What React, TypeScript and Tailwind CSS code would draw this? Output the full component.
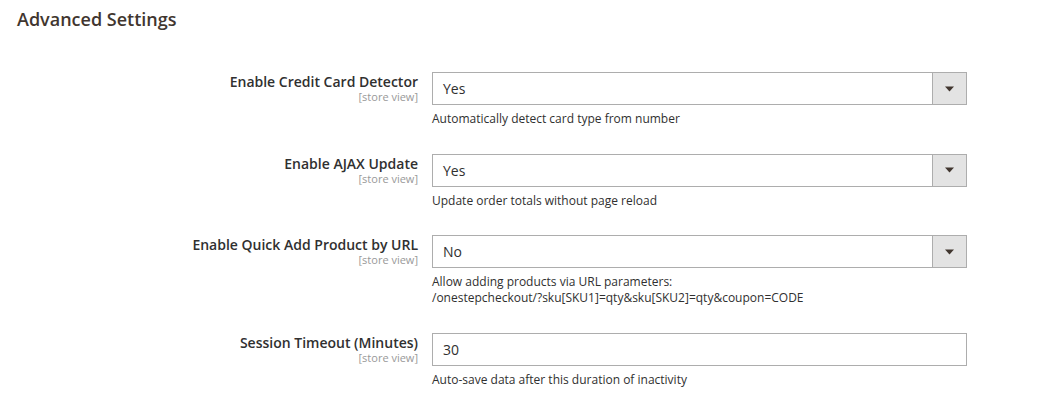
import React from "react";

type Row = {
  label: string;
  kind: "select" | "input";
  value: string;
  note: string[];
};

const rows: Row[] = [
  { label: "Enable Credit Card Detector", kind: "select", value: "Yes", note: ["Automatically detect card type from number"] },
  { label: "Enable AJAX Update", kind: "select", value: "Yes", note: ["Update order totals without page reload"] },
  {
    label: "Enable Quick Add Product by URL",
    kind: "select",
    value: "No",
    note: ["Allow adding products via URL parameters:", "/onestepcheckout/?sku[SKU1]=qty&sku[SKU2]=qty&coupon=CODE"],
  },
  { label: "Session Timeout (Minutes)", kind: "input", value: "30", note: ["Auto-save data after this duration of inactivity"] },
];

function Field({ row }: { row: Row }) {
  return (
    <div className="flex">
      <div className="w-[418px] shrink-0 text-right pt-[1px]">
        <div className="text-[14px] leading-[18px] font-semibold text-[#303030]">{row.label}</div>
        <div className="text-[11px] leading-[11px] text-[#999999]">[store view]</div>
      </div>
      <div className="ml-[14px] w-[535px] shrink-0">
        {row.kind === "select" ? (
          <div className="flex h-[33px] border border-[#adadad] bg-white">
            <div className="flex-1 flex items-center pl-[10px] text-[14px] text-[#303030]">{row.value}</div>
            <div className="w-[34px] border-l border-[#adadad] bg-[#e3e3e3] flex items-center justify-center">
              <svg width="9" height="6" viewBox="0 0 9 6">
                <polygon points="0,0.5 9,0.5 4.5,5.5" fill="#41362f" />
              </svg>
            </div>
          </div>
        ) : (
          <div className="flex h-[33px] items-center border border-[#adadad] bg-white pl-[10px] text-[14px] text-[#303030]">
            {row.value}
          </div>
        )}
        <div className="mt-[6px] text-[12px] leading-[16px] text-[#303030]">
          {row.note.map((n, i) => (
            <div key={i}>{n}</div>
          ))}
        </div>
      </div>
    </div>
  );
}

export default function App() {
  return (
    <div className="w-[1046px] h-[396px] bg-white overflow-hidden" style={{ fontFamily: '"Open Sans", "Noto Sans", sans-serif' }}>
      <div className="pl-[17px] pt-[9px] text-[18px] leading-[21px] font-semibold text-[#41362f]">Advanced Settings</div>
      <div className="mt-[42px] flex flex-col gap-[26.5px]">
        {rows.map((r) => (
          <Field key={r.label} row={r} />
        ))}
      </div>
    </div>
  );
}
